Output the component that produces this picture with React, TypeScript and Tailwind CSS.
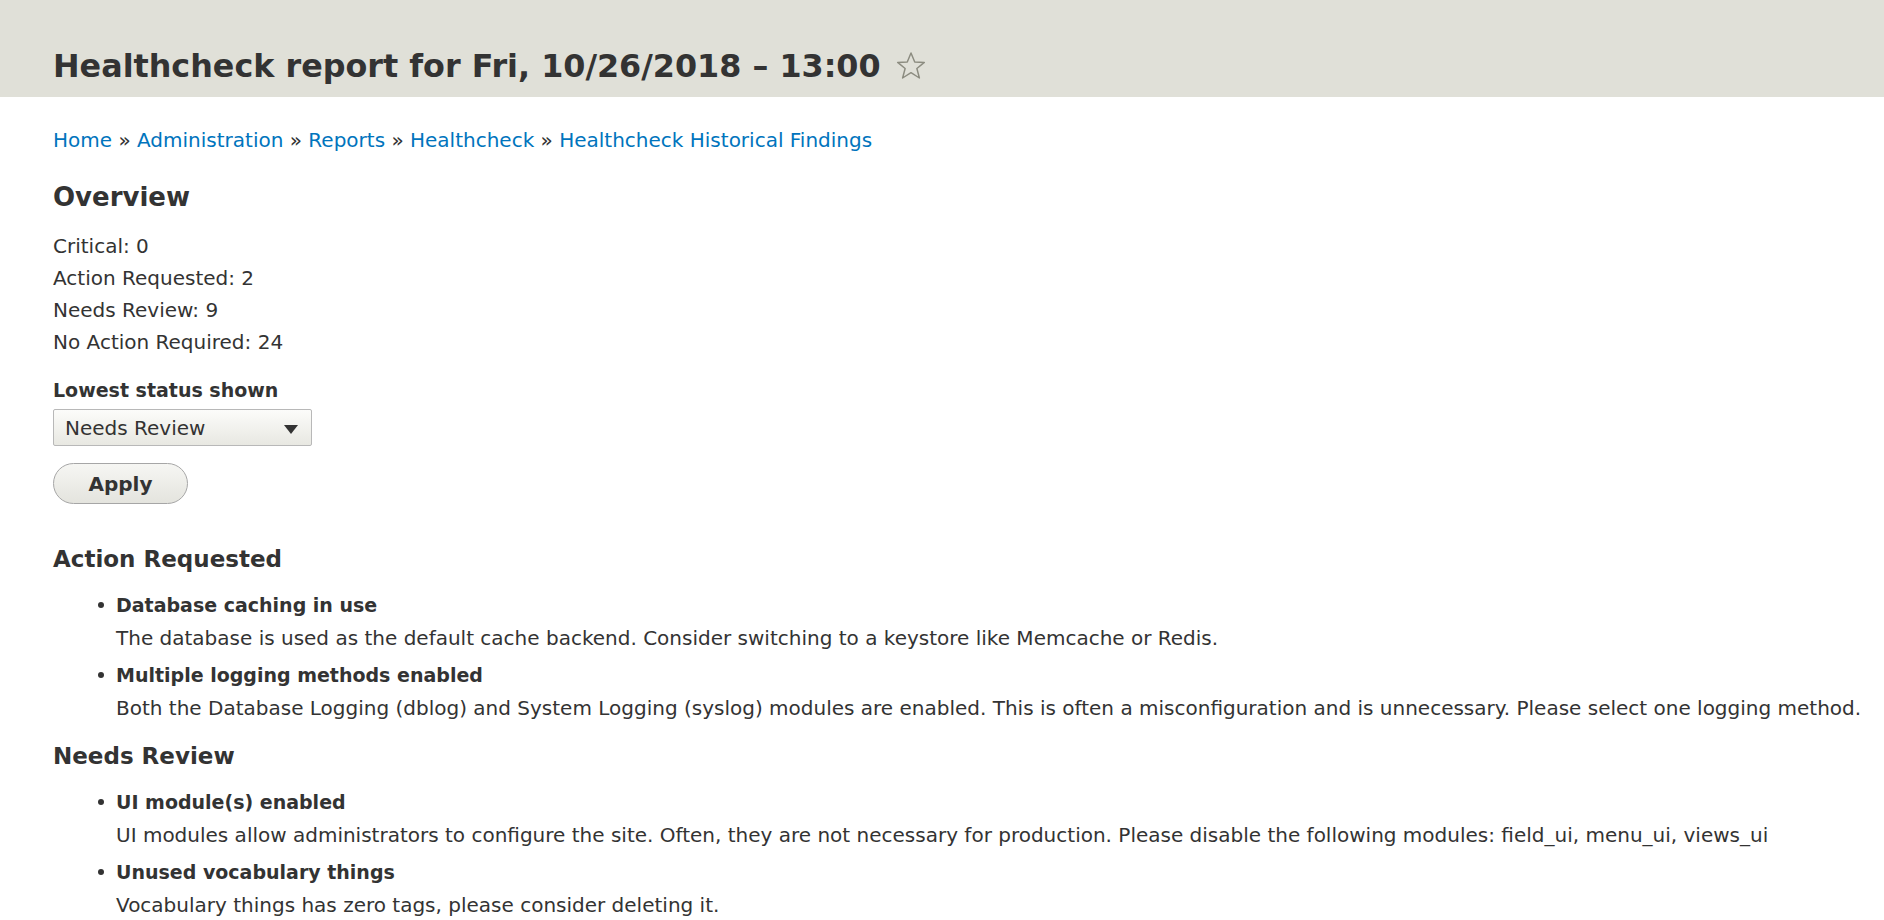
import React from "react";

const crumbs = [
  "Home",
  "Administration",
  "Reports",
  "Healthcheck",
  "Healthcheck Historical Findings",
];

const counts = [
  "Critical: 0",
  "Action Requested: 2",
  "Needs Review: 9",
  "No Action Required: 24",
];

const sections = [
  {
    title: "Action Requested",
    items: [
      {
        label: "Database caching in use",
        text: "The database is used as the default cache backend. Consider switching to a keystore like Memcache or Redis.",
      },
      {
        label: "Multiple logging methods enabled",
        text: "Both the Database Logging (dblog) and System Logging (syslog) modules are enabled. This is often a misconfiguration and is unnecessary. Please select one logging method.",
      },
    ],
  },
  {
    title: "Needs Review",
    items: [
      {
        label: "UI module(s) enabled",
        text: "UI modules allow administrators to configure the site. Often, they are not necessary for production. Please disable the following modules: field_ui, menu_ui, views_ui",
      },
      {
        label: "Unused vocabulary things",
        text: "Vocabulary things has zero tags, please consider deleting it.",
      },
    ],
  },
];

const StarIcon = () => (
  <svg width="32" height="32" viewBox="0 0 24 24" className="ml-[14px]">
    <polygon
      points="12,2.2 14.8,9 22,9.3 16.4,13.9 18.3,21 12,17 5.7,21 7.6,13.9 2,9.3 9.2,9"
      fill="none"
      stroke="#8c8c80"
      strokeWidth="1.1"
      strokeLinejoin="round"
    />
  </svg>
);

export default function App() {
  return (
    <div className="min-h-[920px] bg-white text-[#333] font-['DejaVu_Sans',sans-serif]">
      <div className="h-[97px] bg-[#e0e0d8] pl-[53px] pt-[46px]">
        <div className="flex items-center h-[40px]">
          <h1 className="text-[31.8px] leading-[40px] font-bold">
            Healthcheck report for Fri, 10/26/2018 – 13:00
          </h1>
          <StarIcon />
        </div>
      </div>

      <div className="px-[53px]">
        <nav className="mt-[27px] text-[20px] leading-[32px]">
          {crumbs.map((c, i) => (
            <span key={c}>
              {i > 0 && <span className="text-[#333]"> » </span>}
              <a className="text-[#0074bd]" href="#">
                {c}
              </a>
            </span>
          ))}
        </nav>

        <h2 className="mt-[25px] text-[26px] leading-[32px] font-bold">Overview</h2>
        <div className="mt-[17px] text-[20px] leading-[32px]">
          {counts.map((c) => (
            <div key={c}>{c}</div>
          ))}
        </div>

        <label className="block mt-[18px] text-[19px] leading-[28px] font-bold">
          Lowest status shown
        </label>
        <div className="mt-[5px] relative w-[259px] h-[37px] rounded-[2px] border border-[#b8b8b8] bg-gradient-to-b from-[#fcfcfa] to-[#e8e8e2] flex items-center pl-[11px] text-[20px]">
          Needs Review
          <span className="absolute right-[13px] top-[15px] w-0 h-0 border-l-[7px] border-r-[7px] border-t-[9px] border-l-transparent border-r-transparent border-t-[#333]" />
        </div>
        <button className="mt-[17px] w-[135px] h-[41px] rounded-full border border-[#a6a6a6] bg-gradient-to-b from-[#f6f6f3] to-[#e4e4de] text-[20px] font-bold text-[#333]">
          Apply
        </button>

        {sections.map((s, si) => (
          <div key={s.title} className={si === 0 ? "mt-[39px]" : "mt-[16px]"}>
            <h3 className="text-[23px] leading-[32px] font-bold">{s.title}</h3>
            <ul className="mt-[14px] pl-[63px] flex flex-col gap-[5px]">
              {s.items.map((it) => (
                <li key={it.label} className="relative">
                  <span className="absolute -left-[18px] top-[13px] w-[6px] h-[6px] rounded-full bg-[#333]" />
                  <div className="text-[19px] leading-[33px] font-bold">{it.label}</div>
                  <div className="text-[20px] leading-[32px] whitespace-nowrap">{it.text}</div>
                </li>
              ))}
            </ul>
          </div>
        ))}
      </div>
    </div>
  );
}
